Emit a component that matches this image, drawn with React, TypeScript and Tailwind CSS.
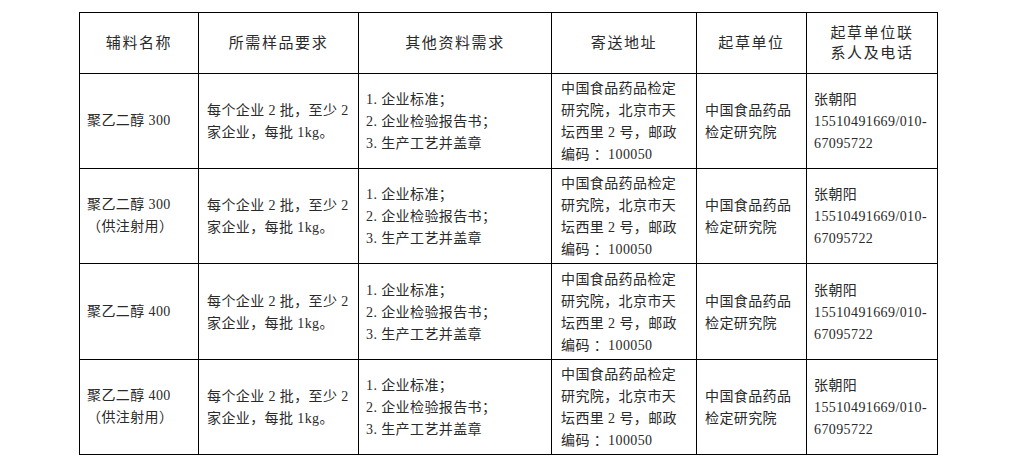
const FONT = "font-['Liberation_Serif','Noto_Sans_CJK_SC',serif]";

interface RowData {
  name: string[];
}

const rows: RowData[] = [
  { name: ["聚乙二醇 300"] },
  { name: ["聚乙二醇 300", "（供注射用）"] },
  { name: ["聚乙二醇 400"] },
  { name: ["聚乙二醇 400", "（供注射用）"] },
];

const rowHeights = ["h-[95px]", "h-[95px]", "h-[96px]", "h-[95px]"];

function Lines({ lines }: { lines: string[] }) {
  return (
    <div>
      {lines.map((l, i) => (
        <div key={i} className="whitespace-pre">
          {l}
        </div>
      ))}
    </div>
  );
}

const headCell =
  "border-r border-b border-black flex items-center justify-center text-center text-[15px] leading-[20px] tracking-[1.6px]";
const bodyCell =
  "border-r border-b border-black flex items-center text-[14px] leading-[22px] tracking-[0.4px]";

export default function App() {
  return (
    <div className={`min-h-[463px] bg-white pl-[79px] pt-[12px] text-[#2a2a2a] ${FONT}`}>
      <div className="grid w-max grid-cols-[119px_160px_193px_145px_110px_131px] border-l border-t border-black">
        {/* 表头 */}
        <div className={`${headCell} h-[61px]`}>辅料名称</div>
        <div className={headCell}>所需样品要求</div>
        <div className={headCell}>其他资料需求</div>
        <div className={headCell}>寄送地址</div>
        <div className={headCell}>起草单位</div>
        <div className={headCell}>
          <div>
            起草单位联
            <br />
            系人及电话
          </div>
        </div>

        {rows.map((r, i) => (
          <div key={i} className="contents">
            <div className={`${bodyCell} ${rowHeights[i]} pl-[7px]`}>
              <Lines lines={r.name} />
            </div>
            <div className={`${bodyCell} pl-[8px] pt-[2px]`}>
              <Lines lines={["每个企业 2 批，至少 2", "家企业，每批 1kg。"]} />
            </div>
            <div className={`${bodyCell} pl-[7px] pt-[2px]`}>
              <Lines lines={["1. 企业标准；", "2. 企业检验报告书；", "3. 生产工艺并盖章"]} />
            </div>
            <div className={`${bodyCell} pl-[9px] pt-[2px]`}>
              <Lines
                lines={["中国食品药品检定", "研究院，北京市天", "坛西里 2 号，邮政", "编码 ：100050"]}
              />
            </div>
            <div className={`${bodyCell} pl-[8px] pt-[2px]`}>
              <Lines lines={["中国食品药品", "检定研究院"]} />
            </div>
            <div className={`${bodyCell} pl-[7px] pt-[2px]`}>
              <Lines lines={["张朝阳", "15510491669/010-", "67095722"]} />
            </div>
          </div>
        ))}
      </div>
    </div>
  );
}
